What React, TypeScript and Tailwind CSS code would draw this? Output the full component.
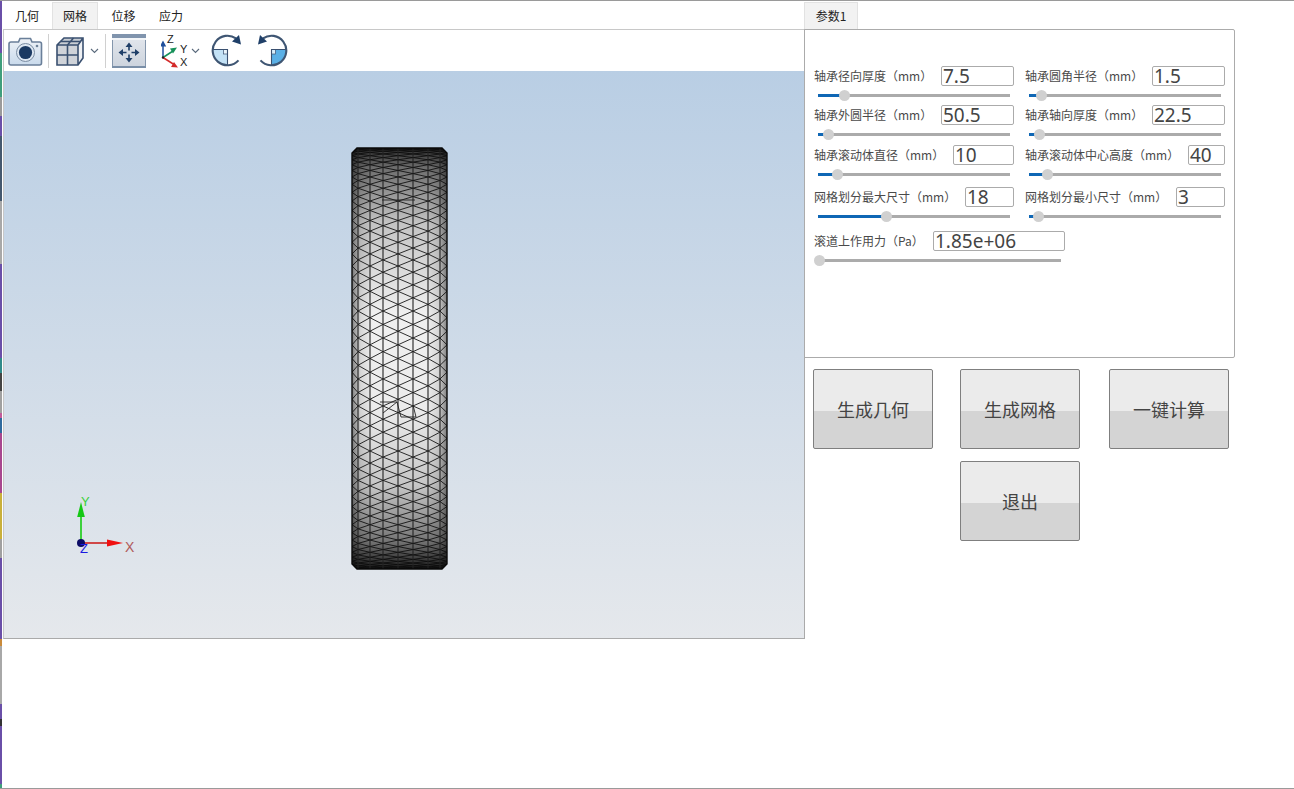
import React from "react";

const CJK = "font-['Noto_Sans_CJK_SC','Noto_Sans',sans-serif]";

function Slider({ width, fill, className = "" }: { width: number; fill: number; className?: string }) {
  return (
    <div className={`relative h-[11px] ${className}`} style={{ width }}>
      <div className="absolute left-0 right-0 top-[4px] h-[3px] bg-[#ababab]" />
      <div className="absolute left-0 top-[4px] h-[3px] bg-[#0f67b5]" style={{ width: fill }} />
      <div className="absolute top-0 h-[11px] w-[11px] rounded-full bg-[#d0d0d0]" style={{ left: fill - 5 }} />
    </div>
  );
}

function Field({
  label, value, inputW, fill, width = 200, trackW = 192, trackClass = "ml-[4px]",
}: { label: string; value: string; inputW: number; fill: number; width?: number; trackW?: number; trackClass?: string }) {
  return (
    <div className="flex flex-col" style={{ width }}>
      <div className="flex h-[20px] items-center justify-between">
        <span className="whitespace-nowrap text-[12px] leading-[20px] text-[#4a4a4a]">{label}</span>
        <div
          className="flex h-[20px] items-center rounded-[2px] border border-[#ababab] bg-white pl-[1px] font-['Noto_Sans',sans-serif] text-[19px] leading-[18px] text-[#444]"
          style={{ width: inputW }}
        >
          {value}
        </div>
      </div>
      <Slider width={trackW} fill={fill} className={`mt-[4px] ${trackClass}`} />
    </div>
  );
}

function Btn({ children, className = "" }: { children: React.ReactNode; className?: string }) {
  return (
    <div
      className={`flex h-[80px] w-[120px] items-center justify-center rounded-[2px] border border-[#7f7f7f] bg-[linear-gradient(#ebebeb_0%,#ebebeb_52%,#d4d4d4_52%,#d4d4d4_100%)] text-[18px] text-[#444] ${className}`}
    >
      {children}
    </div>
  );
}

function Tab({ children, active = false, w }: { children: React.ReactNode; active?: boolean; w: string }) {
  return (
    <div
      className={`flex h-[27px] items-center justify-center text-[12px] text-[#222] ${w} ${
        active ? "border border-b-0 border-[#e2e2e2] bg-[#f2f2f2]" : ""
      }`}
    >
      {children}
    </div>
  );
}

function Chevron({ className = "" }: { className?: string }) {
  return (
    <svg width="9" height="6" viewBox="0 0 9 6" className={className}>
      <path d="M1 1l3.5 3.5L8 1" fill="none" stroke="#5a6a7c" strokeWidth="1.1" />
    </svg>
  );
}

function Camera() {
  return (
    <svg width="35" height="32" viewBox="0 0 35 32">
      <defs>
        <linearGradient id="cam" x1="0" y1="0" x2="0" y2="1">
          <stop offset="0" stopColor="#eef2f7" />
          <stop offset="1" stopColor="#c9daec" />
        </linearGradient>
      </defs>
      <path
        d="M3 7h7.5l1.5-3.5h10.5L24 7h7.5a2 2 0 0 1 2 2v19a2 2 0 0 1-2 2H3a2 2 0 0 1-2-2V9a2 2 0 0 1 2-2z"
        fill="url(#cam)"
        stroke="#6a7f99"
        strokeWidth="1.6"
      />
      <circle cx="17.5" cy="17.5" r="9" fill="#dde7f2" stroke="#7b8da3" strokeWidth="1" />
      <circle cx="17.5" cy="17.5" r="6.6" fill="#1b3a63" />
      <circle cx="29" cy="11" r="1.3" fill="#6d8198" />
    </svg>
  );
}

function Cube() {
  return (
    <svg width="30" height="32" viewBox="0 0 30 32">
      <path d="M2 10L9 3h19v20l-5 7H2z" fill="#c9ced5" />
      <path d="M2 10h21v20H2z" fill="#cfd3d9" />
      <path d="M23 10l5-7v20l-5 7z" fill="#eef0f3" />
      <path d="M2 10L9 3h19v20l-5 7H2zM2 10h21v20M23 10l5-7" fill="none" stroke="#3a5070" strokeWidth="1.6" />
      <path d="M12.5 10v20M2 20h21M12.5 10l6-7M5.5 6.5h20" fill="none" stroke="#3a5070" strokeWidth="1.6" />
    </svg>
  );
}

function FitView() {
  return (
    <svg width="34" height="34" viewBox="0 0 34 34">
      <defs>
        <linearGradient id="fitbg" x1="0" y1="0" x2="0" y2="1">
          <stop offset="0" stopColor="#e4e8ee" />
          <stop offset="1" stopColor="#ccd3dd" />
        </linearGradient>
      </defs>
      <rect x="0.5" y="0.5" width="33" height="33" fill="url(#fitbg)" stroke="#8496ac" />
      <rect x="0" y="0" width="34" height="4" fill="#8094ad" />
      <rect x="0" y="4" width="34" height="2" fill="#f2f5f8" />
      <rect x="0" y="32" width="34" height="2" fill="#7a8fa8" />
      <g fill="#1f3f68">
        <path d="M17 8.5l-3.5 4.5h2.7v3.5h1.6V13h2.7z" />
        <path d="M17 28.5l-3.5-4.5h2.7v-3.5h1.6V24h2.7z" />
        <path d="M6.5 18.5l4.5-3.5v2.7h3.5v1.6H11V22z" />
        <path d="M27.5 18.5L23 15v2.7h-3.5v1.6H23V22z" />
      </g>
    </svg>
  );
}

function Triad() {
  return (
    <svg width="28" height="36" viewBox="0 0 28 36" className="font-['Liberation_Sans',sans-serif]">
      <path d="M2 24.5V12" stroke="#1f4f9c" strokeWidth="1.5" />
      <path d="M2 7.5l-3.2 6h6.4z" fill="#1f4f9c" />
      <path d="M2 24.5l10-6.5" stroke="#16915a" strokeWidth="1.5" />
      <path d="M16 14.5l-7 1 3 5z" fill="#16915a" />
      <path d="M2 24.5l11 7" stroke="#d42a2a" strokeWidth="1.5" />
      <path d="M17 34.5l-7-.5 3-5z" fill="#d42a2a" />
      <circle cx="2" cy="24.5" r="1.2" fill="#222" />
      <text x="6" y="9.5" fontSize="11" fill="#222">Z</text>
      <text x="19" y="20" fontSize="11" fill="#222">Y</text>
      <text x="19" y="33" fontSize="11" fill="#222">X</text>
    </svg>
  );
}

function Rotate({ flip = false, quarter, square }: { flip?: boolean; quarter: string; square: string }) {
  return (
    <svg width="33" height="33" viewBox="0 0 33 33" className={flip ? "-scale-x-100" : ""}>
      <path d="M1.7 15.5H16.5V31.3A14.8 14.8 0 0 1 1.7 15.5z" fill={quarter} />
      <rect x="12.5" y="15.5" width="4" height="4.5" fill={square} stroke="#3a5070" strokeWidth="0.7" />
      <path d="M1.7 15.5H16.5V31" stroke="#3a5070" strokeWidth="1.1" fill="none" />
      <path d="M25 4.4A14.8 14.8 0 1 0 27.5 26.4" fill="none" stroke="#3f5673" strokeWidth="2.1" />
      <path d="M21 7.5L28 1l2 9.5z" fill="#1f3f68" />
    </svg>
  );
}

const COLS = [352, 358, 370, 383, 398, 413, 428, 440, 447];

function Mesh() {
  const cy = 358.5;
  const R = 210.5;
  const d = 0.0325;
  const N = 48;
  const yAt = (i: number) => cy + R * Math.sin(Math.max(-Math.PI / 2, Math.min(Math.PI / 2, i * d)));
  const lines: React.ReactNode[] = [];
  for (let i = -N; i <= N; i++) {
    for (let j = 0; j < COLS.length; j++) {
      if (((i + j) % 2 + 2) % 2 !== 0) continue;
      if (i < N) {
        if (j > 0)
          lines.push(<line key={`a${i}_${j}`} x1={COLS[j]} y1={yAt(i)} x2={COLS[j - 1]} y2={yAt(i + 1)} />);
        if (j < COLS.length - 1)
          lines.push(<line key={`b${i}_${j}`} x1={COLS[j]} y1={yAt(i)} x2={COLS[j + 1]} y2={yAt(i + 1)} />);
      }
    }
  }
  const clip = "357,148 442,148 447,153 447,564 442,569 357,569 352,564 352,153";
  return (
    <svg width="97" height="423" viewBox="351 147 97 423" className="absolute left-[347px] top-[76px]">
      <defs>
        <clipPath id="ring">
          <polygon points={clip} />
        </clipPath>
        <linearGradient id="vs" x1="0" y1="0" x2="0" y2="1">
          <stop offset="0" stopColor="#2a2a2a" />
          <stop offset="0.05" stopColor="#6e6e6e" />
          <stop offset="0.18" stopColor="#c4c4c4" />
          <stop offset="0.4" stopColor="#f0f0f0" />
          <stop offset="0.62" stopColor="#ececec" />
          <stop offset="0.8" stopColor="#c6c6c6" />
          <stop offset="0.93" stopColor="#777" />
          <stop offset="1" stopColor="#1c1c1c" />
        </linearGradient>
        <linearGradient id="hs" x1="0" y1="0" x2="1" y2="0">
          <stop offset="0" stopColor="#000" stopOpacity="0.5" />
          <stop offset="0.1" stopColor="#000" stopOpacity="0.1" />
          <stop offset="0.22" stopColor="#000" stopOpacity="0" />
          <stop offset="0.78" stopColor="#000" stopOpacity="0" />
          <stop offset="0.9" stopColor="#000" stopOpacity="0.1" />
          <stop offset="1" stopColor="#000" stopOpacity="0.5" />
        </linearGradient>
      </defs>
      <g clipPath="url(#ring)">
        <rect x="351" y="147" width="97" height="423" fill="url(#vs)" />
        <rect x="351" y="147" width="97" height="423" fill="url(#hs)" />
        <g stroke="#0c0c0c" strokeWidth="0.85" fill="none">{lines}</g>
        <g stroke="#222" strokeWidth="1.1" fill="none">
          {COLS.slice(1, -1).map((x) => (
            <line key={x} x1={x} x2={x} y1={148} y2={569} />
          ))}
        </g>
        <g stroke="#222" strokeWidth="0.9" fill="none">
          <path d="M380 402L397 402L383 413M397 402L401 417L416 417L413 405" />
          <path d="M382 200L398 200L415 200" />
        </g>
      </g>
      <polygon points={clip} fill="none" stroke="#0a0a0a" strokeWidth="1.4" />
    </svg>
  );
}

function AxisMark() {
  return (
    <svg
      width="70"
      height="64"
      viewBox="70 492 70 64"
      className="absolute left-[66px] top-[421px] font-['Liberation_Sans',sans-serif]"
    >
      <line x1="81" y1="543" x2="81" y2="515" stroke="#3dd13d" strokeWidth="2" />
      <path d="M81 502l-3.8 15h7.6z" fill="#14c814" />
      <line x1="81" y1="543" x2="109" y2="543" stroke="#d04848" strokeWidth="2" />
      <path d="M123 543l-16-3.6v7.2z" fill="#f01010" />
      <circle cx="81" cy="543" r="4" fill="#0c0c66" />
      <text x="81" y="506" fontSize="13" fill="#3dd13d">Y</text>
      <text x="125" y="552" fontSize="14" fill="#b05a5a">X</text>
      <text x="80" y="553" fontSize="13" fill="#1a1ae0">Z</text>
    </svg>
  );
}

export default function App() {
  return (
    <div className={`relative flex h-[789px] w-[1294px] overflow-hidden border-y border-[#9a9a9a] bg-white pl-[3px] ${CJK}`}>
      <div className="absolute bottom-0 left-0 top-0 w-[2px] bg-[linear-gradient(#6a4fa8_0px,#6a4fa8_52px,#3f9e7c_52px,#3f9e7c_96px,#9a9a9a_96px,#9a9a9a_115px,#6a4fa8_115px,#6a4fa8_135px,#44586e_135px,#44586e_200px,#a8a8a8_200px,#a8a8a8_263px,#6a4fa8_263px,#6a4fa8_357px,#2f8a8a_357px,#2f8a8a_372px,#444_372px,#444_390px,#a0a0a0_390px,#a0a0a0_412px,#c25a9a_412px,#c25a9a_417px,#2f6a9e_417px,#2f6a9e_432px,#a8478f_432px,#a8478f_492px,#c9b03a_492px,#c9b03a_538px,#a0a0a0_538px,#a0a0a0_557px,#6a4fa8_557px,#6a4fa8_638px,#c98a3a_638px,#c98a3a_645px,#a8a8a8_645px,#a8a8a8_703px,#6a4fa8_703px,#6a4fa8_718px,#333_718px,#333_725px,#6a4fa8_725px,#6a4fa8_783px,#3f9e7c_783px)]" />
      <div className="flex w-[802px] shrink-0 flex-col">
        <div className="flex h-[28px] items-end">
          <Tab w="w-[48px]">几何</Tab>
          <Tab w="ml-[1px] w-[46px]" active>网格</Tab>
          <Tab w="w-[51px]">位移</Tab>
          <Tab w="w-[44px]">应力</Tab>
        </div>
        <div className="flex h-[610px] flex-col border-r border-b border-l border-t border-r-[#aaa] border-b-[#aaa] border-l-[#c8c8c8] border-t-[#c8c8c8]">
          <div className="flex h-[41px] items-center bg-white pl-[4px]">
            <Camera />
            <div className="ml-[5px] h-[34px] w-px bg-[#d0d0d0]" />
            <div className="ml-[6px]"><Cube /></div>
            <Chevron className="ml-[5px]" />
            <div className="ml-[6px] h-[34px] w-px bg-[#d0d0d0]" />
            <div className="ml-[6px]"><FitView /></div>
            <div className="ml-[15px]"><Triad /></div>
            <Chevron className="ml-[2px]" />
            <div className="ml-[11px]"><Rotate quarter="#c3e2f6" square="#e9f5fc" /></div>
            <div className="ml-[11px]"><Rotate flip quarter="#5ab0e6" square="#d8eefb" /></div>
          </div>
          <div className="relative flex-1 bg-[linear-gradient(#b9cee4,#e5e8ec)]">
            <Mesh />
            <AxisMark />
          </div>
        </div>
      </div>
      <div className="ml-[-1px] flex w-[431px] flex-col">
        <div className="h-[28px] pt-[1px]">
          <div className="flex h-[27px] w-[54px] items-center justify-center border border-b-0 border-[#e2e2e2] bg-[#f2f2f2] text-[12px] text-[#222]">
            参数1
          </div>
        </div>
        <div className="h-[329px] rounded-r-[2px] border border-[#ababab] pl-[9px] pt-[36px]">
          <div className="flex gap-[11px]">
            <Field label="轴承径向厚度（mm）" value="7.5" inputW={73} fill={26} />
            <Field label="轴承圆角半径（mm）" value="1.5" inputW={73} fill={12} />
          </div>
          <div className="mt-[4px] flex gap-[11px]">
            <Field label="轴承外圆半径（mm）" value="50.5" inputW={73} fill={10} />
            <Field label="轴承轴向厚度（mm）" value="22.5" inputW={73} fill={10} />
          </div>
          <div className="mt-[5px] flex gap-[11px]">
            <Field label="轴承滚动体直径（mm）" value="10" inputW={61} fill={19} />
            <Field label="轴承滚动体中心高度（mm）" value="40" inputW={37} fill={18} />
          </div>
          <div className="mt-[7px] flex gap-[11px]">
            <Field label="网格划分最大尺寸（mm）" value="18" inputW={49} fill={68} />
            <Field label="网格划分最小尺寸（mm）" value="3" inputW={49} fill={9} />
          </div>
          <div className="mt-[9px] w-[251px]">
            <Field label="滚道上作用力（Pa）" value="1.85e+06" inputW={132} fill={4} width={251} trackW={246} trackClass="ml-[1px]" />
          </div>
        </div>
        <div className="ml-[9px] mt-[11px] flex gap-[27px]">
          <Btn>生成几何</Btn>
          <Btn>生成网格</Btn>
          <Btn className="ml-[2px]">一键计算</Btn>
        </div>
        <div className="ml-[156px] mt-[12px]">
          <Btn>退出</Btn>
        </div>
      </div>
    </div>
  );
}
